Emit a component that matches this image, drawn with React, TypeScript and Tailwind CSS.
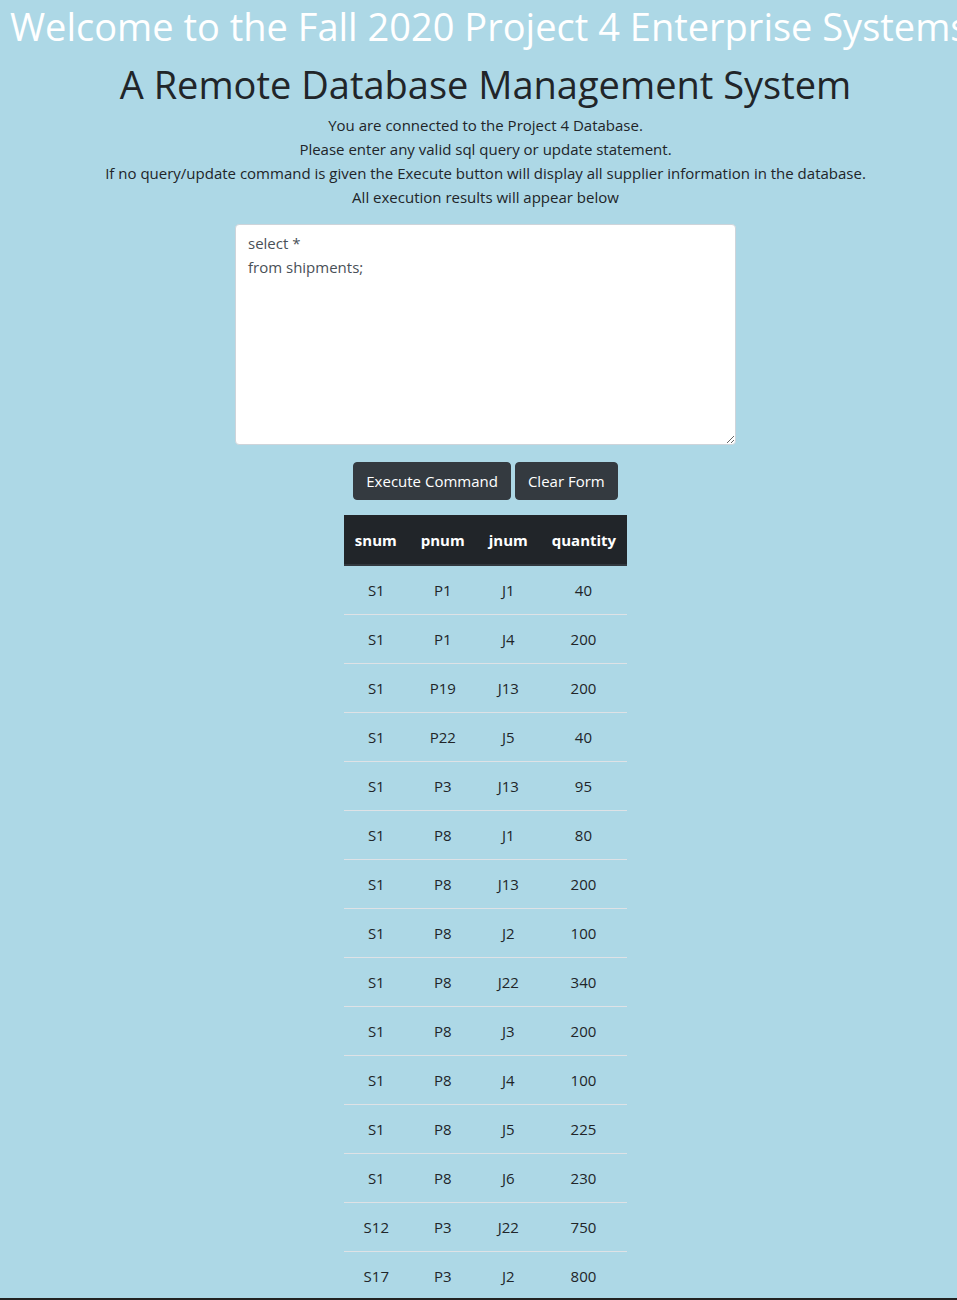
const rows = [
  ["S1", "P1", "J1", "40"],
  ["S1", "P1", "J4", "200"],
  ["S1", "P19", "J13", "200"],
  ["S1", "P22", "J5", "40"],
  ["S1", "P3", "J13", "95"],
  ["S1", "P8", "J1", "80"],
  ["S1", "P8", "J13", "200"],
  ["S1", "P8", "J2", "100"],
  ["S1", "P8", "J22", "340"],
  ["S1", "P8", "J3", "200"],
  ["S1", "P8", "J4", "100"],
  ["S1", "P8", "J5", "225"],
  ["S1", "P8", "J6", "230"],
  ["S12", "P3", "J22", "750"],
  ["S17", "P3", "J2", "800"],
  ["S17", "P3", "J3", "170"],
];

const font = { fontFamily: '"Open Sans", "Noto Sans", sans-serif' };

export default function App() {
  return (
    <div className="flex h-[1300px] flex-col overflow-hidden bg-[#add8e6] text-[#212529]" style={font}>
      <div className="flex-1 overflow-hidden">
        <h1 className="whitespace-nowrap pl-[10px] pt-[2px] text-[38px] leading-[48px] text-white">
          Welcome to the Fall 2020 Project 4 Enterprise Systems
        </h1>
        <div className="flex flex-col items-center pl-[14px]">
          <h2 className="mt-[10px] text-[38px] leading-[48px]">A Remote Database Management System</h2>
          <div className="mt-[5px] text-center text-[15px] leading-[24px]">
            <p>You are connected to the Project 4 Database.</p>
            <p>Please enter any valid sql query or update statement.</p>
            <p>If no query/update command is given the Execute button will display all supplier information in the database.</p>
            <p>All execution results will appear below</p>
          </div>
          <textarea
            className="mt-[15px] h-[221px] w-[501px] resize rounded-[4px] border border-[#ced4da] bg-white px-[12px] py-[6px] text-[15px] leading-[24px] text-[#495057] outline-none"
            defaultValue={"select *\nfrom shipments;"}
          />
          <div className="mt-[17px] flex gap-[4px]">
            <button className="h-[38px] rounded-[4px] border border-[#343a40] bg-[#343a40] px-[12px] text-[15px] text-white">
              Execute Command
            </button>
            <button className="h-[38px] rounded-[4px] border border-[#343a40] bg-[#343a40] px-[12px] text-[15px] text-white">
              Clear Form
            </button>
          </div>
          <table className="mt-[15px] border-collapse text-center text-[15px]">
            <thead>
              <tr className="bg-[#212529] text-white">
                {["snum", "pnum", "jnum", "quantity"].map((h) => (
                  <th
                    key={h}
                    className="border-t border-b-2 border-[#212529] border-b-[#32383e] px-[12px] py-[12px] font-bold leading-[24px] first:pl-[11px] last:pr-[11px]"
                  >
                    {h}
                  </th>
                ))}
              </tr>
            </thead>
            <tbody>
              {rows.map((r, i) => (
                <tr key={i}>
                  {r.map((c, j) => (
                    <td key={j} className="border-t border-[#dee2e6] px-[12px] py-[12px] leading-[24px]">
                      {c}
                    </td>
                  ))}
                </tr>
              ))}
            </tbody>
          </table>
        </div>
      </div>
      <div className="h-[2px] bg-[#222]" />
    </div>
  );
}
